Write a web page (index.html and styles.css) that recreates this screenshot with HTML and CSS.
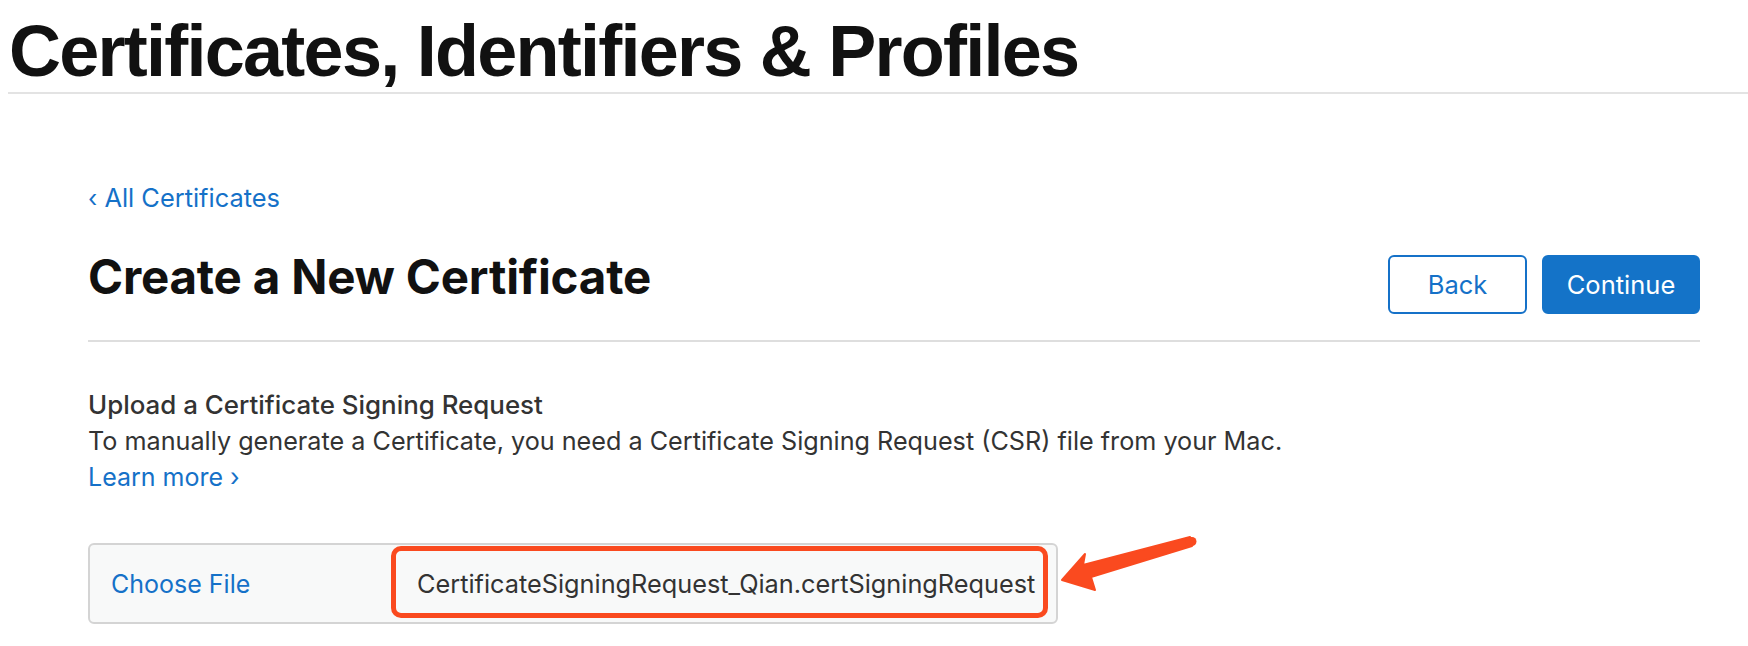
FILE: index.html
```html
<!DOCTYPE html>
<html lang="en">
<head>
<meta charset="utf-8">
<title>Certificates, Identifiers &amp; Profiles</title>
<link rel="stylesheet" href="styles.css">
</head>
<body>
<header class="page-header">
  <h1 class="page-title">Certificates, Identifiers &amp; Profiles</h1>
</header>
<main class="content">
  <a class="back-link" href="#"><span class="chev">‹</span> All Certificates</a>
  <div class="title-row">
    <h2 class="section-title">Create a New Certificate</h2>
    <div class="actions">
      <button class="btn btn-outline" type="button">Back</button>
      <button class="btn btn-primary" type="button">Continue</button>
    </div>
  </div>
  <section class="upload">
    <h3 class="upload-title">Upload a Certificate Signing Request</h3>
    <p class="upload-desc">To manually generate a Certificate, you need a Certificate Signing Request (CSR) file from your Mac.</p>
    <a class="learn-more" href="#">Learn more ›</a>
    <div class="file-row">
      <div class="file-box">
        <span class="choose">Choose File</span>
        <span class="filename">CertificateSigningRequest_Qian.certSigningRequest</span>
      </div>
      <div class="highlight"></div>
      <svg class="arrow" width="150" height="70" viewBox="0 0 150 70" xmlns="http://www.w3.org/2000/svg">
        <polygon points="4,47 27,21 25,32 132,4 134,13 33,44 37,57" fill="#fa4a1f" stroke="#fa4a1f" stroke-width="2" stroke-linejoin="round"/>
        <line x1="132" y1="8.5" x2="134" y2="8.5" stroke="#fa4a1f" stroke-width="9" stroke-linecap="round"/>
      </svg>
    </div>
  </section>
</main>
</body>
</html>
```

FILE: styles.css
```css
* { box-sizing: border-box; }
html, body { margin: 0; padding: 0; background: #fff; }
body {
  font-family: "Inter", "Liberation Sans", sans-serif;
  color: #333;
}
.page-header {
  margin-left: 8px;
  border-bottom: 2px solid #e3e3e3;
  padding: 10px 0 0 1px;
  height: 94px;
}
.page-title {
  margin: 0;
  font-family: "Liberation Sans", Arial, sans-serif;
  font-weight: bold;
  font-size: 72px;
  line-height: 82px;
  color: #111;
  letter-spacing: -1.75px;
}
.content {
  width: 1700px;
  padding-left: 88px;
  padding-top: 89px;
}
.back-link {
  display: inline-block;
  color: #1571c8;
  text-decoration: none;
  font-size: 25.4px;
  line-height: 30px;
}
.chev { font-size: 24px; }
.title-row {
  display: flex;
  align-items: flex-start;
  justify-content: space-between;
  margin-top: 34px;
  padding-bottom: 26px;
  border-bottom: 2px solid #dedede;
}
.section-title {
  margin: 0;
  font-size: 47.5px;
  font-weight: 700;
  color: #111;
  line-height: 58px;
  letter-spacing: -0.2px;
}
.actions { display: flex; gap: 15px; margin-top: 7px; }
.btn {
  height: 59px;
  font-family: "Inter", "Liberation Sans", sans-serif;
  font-size: 25.5px;
  border-radius: 6px;
  cursor: pointer;
  padding: 0;
}
.btn-outline {
  width: 139px;
  background: #fff;
  color: #1571c8;
  border: 2px solid #1571c8;
}
.btn-primary {
  width: 158px;
  background: #1473c8;
  color: #fff;
  border: 2px solid #1473c8;
}
.upload { padding-top: 45px; }
.upload-title {
  margin: 0;
  font-size: 25.9px;
  font-weight: 500;
  line-height: 36px;
  color: #333;
}
.upload-desc {
  margin: 0;
  font-size: 25.2px;
  line-height: 36px;
  color: #333;
}
.learn-more {
  display: inline-block;
  color: #1571c8;
  text-decoration: none;
  font-size: 25px;
  line-height: 36px;
}
.file-row {
  position: relative;
  margin-top: 48px;
  width: 970px;
}
.file-box {
  display: flex;
  align-items: center;
  width: 970px;
  height: 81px;
  background: #f8f9f9;
  border: 2px solid #d4d4d4;
  border-radius: 6px;
  padding-left: 21px;
}
.choose {
  color: #1571c8;
  font-size: 25px;
  width: 306px;
}
.filename {
  color: #333;
  font-size: 25.3px;
}
.highlight {
  position: absolute;
  left: 303px;
  top: 3px;
  width: 657px;
  height: 72px;
  border: 5px solid #fa4a1f;
  border-radius: 10px;
}
.arrow {
  position: absolute;
  left: 970px;
  top: -10px;
  overflow: visible;
}
```
